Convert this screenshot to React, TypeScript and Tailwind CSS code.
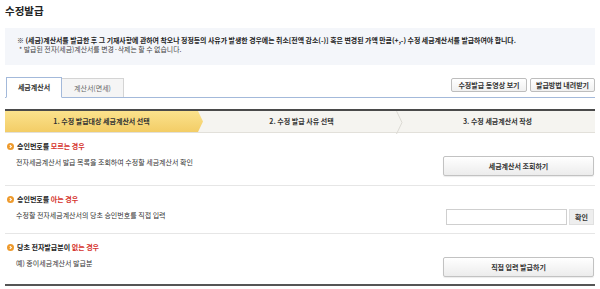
import React from 'react';

const font = { fontFamily: '"Noto Sans CJK KR", "Noto Sans", sans-serif' };

type Case = {
  title: string;
  highlight: string;
  desc: string;
  kind: 'button' | 'input';
  action?: string;
  height: string;
};

const cases: Case[] = [
  {
    title: '승인번호를',
    highlight: '모르는 경우',
    desc: '전자세금계산서 발급 목록을 조회하여 수정할 세금계산서 확인',
    kind: 'button',
    action: '세금계산서 조회하기',
    height: 'h-[53px]',
  },
  {
    title: '승인번호를',
    highlight: '아는 경우',
    desc: '수정할 전자세금계산서의 당초 승인번호를 직접 입력',
    kind: 'input',
    height: 'h-[48px]',
  },
  {
    title: '당초 전자발급분이',
    highlight: '없는 경우',
    desc: '예) 종이세금계산서 발급분',
    kind: 'button',
    action: '직접 입력 발급하기',
    height: 'h-[52px]',
  },
];

const steps = ['1. 수정 발급대상 세금계산서 선택', '2. 수정 발급 사유 선택', '3. 수정 세금계산서 작성'];

const Bullet = () => (
  <svg width="7" height="7" viewBox="0 0 8 8" className="shrink-0">
    <circle cx="4" cy="4" r="4" fill="#ee9a2c" />
    <path d="M3.2 2.3 L5 4 L3.2 5.7" fill="none" stroke="#fff" strokeWidth="1.2" />
  </svg>
);

const Chevron = () => (
  <svg width="7" height="23" viewBox="0 0 7 23" className="absolute right-[-3px] top-0">
    <path d="M0.5 0 L6 11.5 L0.5 23" fill="none" stroke="#dcdad4" strokeWidth="1" />
  </svg>
);

export default function App() {
  return (
    <div style={font} className="w-[600px] h-[289px] bg-white px-[5px] overflow-hidden text-[#333]">
      {/* Title */}
      <h1 className="pt-[5px] text-[10.5px] leading-[12px] font-bold text-[#222]">수정발급</h1>

      {/* Notice */}
      <div className="mt-[11px] h-[37px] bg-[#f4f6fa] pl-[12px] pt-[8px] text-[6.9px] leading-[8.5px]">
        <p className="font-bold text-[#222]">
          ※ (세금)계산서를 발급한 후 그 기재사항에 관하여 착오나 정정등의 사유가 발생한 경우에는 취소[전액 감소(-)] 혹은 변경된 가액 만큼(+,-) 수정 세금계산서를 발급하여야 합니다.
        </p>
        <p className="pl-[2px] text-[#444]">* 발급된 전자(세금)계산서를 변경·삭제는 할 수 없습니다.</p>
      </div>

      {/* Tabs */}
      <div className="mt-[13px] flex h-[20px] items-start justify-between border-b border-[#a3b9da]">
        <div className="flex h-full items-end pl-px">
          <div className="-mb-px flex h-[21px] w-[56px] items-center justify-center border border-b-white border-[#a3b9da] bg-white text-[7px] font-bold text-[#333]">
            세금계산서
          </div>
          <div className="flex h-[19px] w-[62px] items-center justify-center border border-l-0 border-b-0 border-[#d4d4d4] bg-[#f5f5f5] text-[7px] text-[#666]">
            계산서(면세)
          </div>
        </div>
        <div className="flex gap-[3px]">
          <button className="h-[14px] w-[76px] rounded-[2px] border border-[#bdbdbd] bg-gradient-to-b from-white to-[#f0f0f0] text-[7px] leading-none font-bold text-[#333]">
            수정발급 동영상 보기
          </button>
          <button className="h-[14px] w-[65px] rounded-[2px] border border-[#bdbdbd] bg-gradient-to-b from-white to-[#f0f0f0] text-[7px] leading-none font-bold text-[#333]">
            발급방법 내려받기
          </button>
        </div>
      </div>

      {/* Steps */}
      <div className="mt-[11px] flex h-[24px] border-t-2 border-b border-t-[#4a4a4a] border-b-[#e2e0da] bg-[#f5f4f0] text-[7px] font-bold text-[#333]">
        <div className="flex w-[198px] items-center justify-center bg-gradient-to-b from-[#fbe28c] to-[#f3cd66] pr-[5px] [clip-path:polygon(0_0,calc(100%-5px)_0,100%_50%,calc(100%-5px)_100%,0_100%)]">
          {steps[0]}
        </div>
        <div className="relative flex w-[197px] items-center justify-center">
          {steps[1]}
          <Chevron />
        </div>
        <div className="flex flex-1 items-center justify-center">{steps[2]}</div>
      </div>

      {/* Cases */}
      {cases.map((c, i) => (
        <div
          key={c.highlight}
          className={`flex justify-between ${c.height} ${i < cases.length - 1 ? 'border-b border-[#e6e6e6]' : 'border-b-2 border-[#555]'}`}
        >
          <div className="pt-[8px] pl-[2px] text-[7px]">
            <div className="flex h-[10px] items-center gap-[2px] font-bold text-[#222]">
              <Bullet />
              <span className="ml-[1px]">
                {c.title} <span className="text-[#d5322b]">{c.highlight}</span>
              </span>
            </div>
            <p className="mt-[6px] pl-[9px] leading-[10px] text-[#333]">{c.desc}</p>
          </div>
          {c.kind === 'button' ? (
            <button className="mt-[23px] mr-px h-[20px] w-[151px] rounded-[2px] border border-[#c2c2c2] bg-gradient-to-b from-white to-[#ececec] text-[7px] font-bold text-[#333] shadow-[0_1px_1px_rgba(0,0,0,0.08)]">
              {c.action}
            </button>
          ) : (
            <div className="mt-[23px] mr-px flex h-[16px] gap-[2px]">
              <input className="h-full w-[121px] border border-[#cfcfcf] bg-white outline-none" />
              <button className="h-full w-[25px] border border-[#e0e0e0] bg-[#eeeeee] text-[7px] font-bold text-[#333]">
                확인
              </button>
            </div>
          )}
        </div>
      ))}
    </div>
  );
}
